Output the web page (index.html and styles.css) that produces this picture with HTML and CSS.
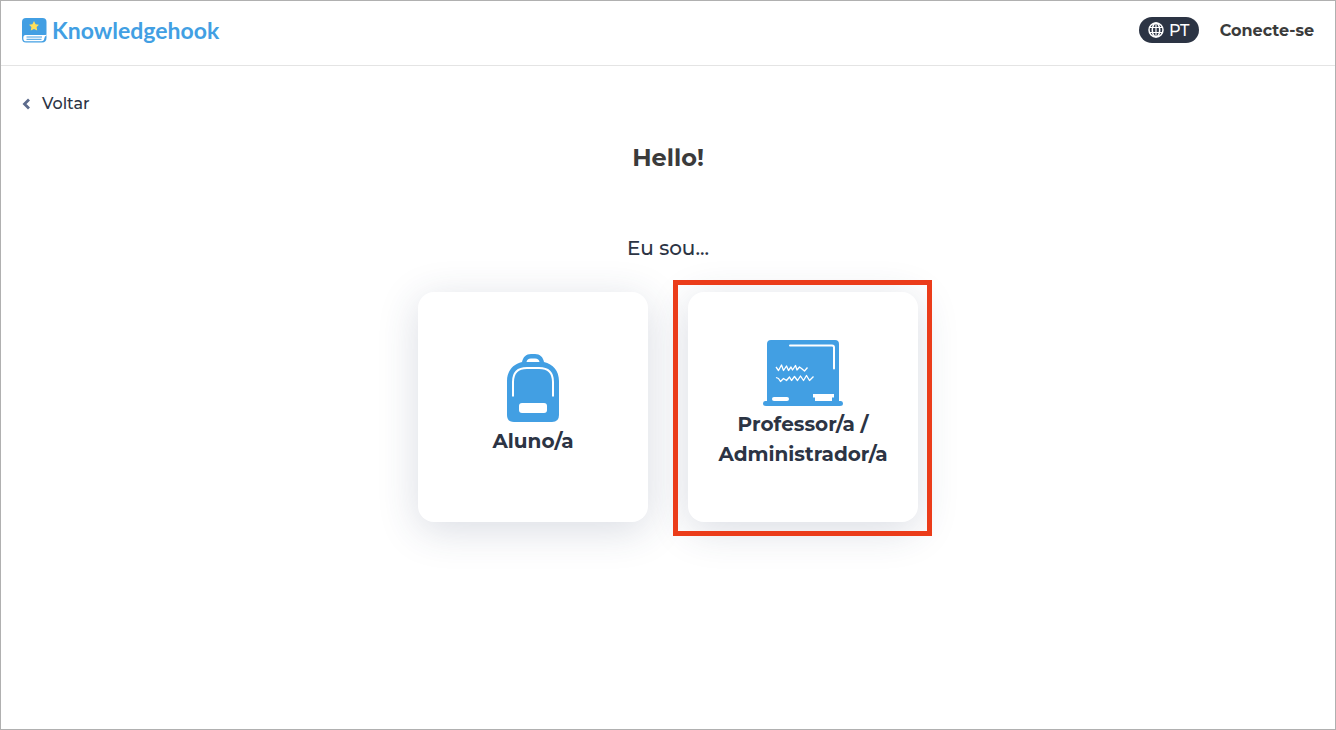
FILE: index.html
```html
<!DOCTYPE html>
<html lang="pt">
<head>
    <meta charset="UTF-8">
    <meta name="viewport" content="width=device-width, initial-scale=1">
    <title>Knowledgehook</title>
    <link rel="stylesheet" href="styles.css">
</head>
<body>
    <header class="header">
        <a class="logo" href="#">
            <svg class="logo-icon" width="26" height="26" viewBox="0 0 26 26" aria-hidden="true">
                <path fill="#429fe3" d="M5 1H21.500Q25.500 1 25.500 5V20.500Q25.500 25.500 21 25.500H5Q1 25.500 1 21V5Q1 1 5 1Z"/>
                <path fill="#fff" d="M4.500 18H24.500Q25.500 18 25.500 16.500V18.500Q23.500 19 23.300 21.500Q23 24.300 20.500 24.300H5Q2.300 24.300 2.300 21.200Q2.300 18 4.500 18Z"/>
                <path fill="none" stroke="#429fe3" d="M5.500 20H21M5.500 22.300H20.500"/>
                <path fill="#ffdf5a" d="M13 4L14.600 7.200L18 7.700L15.600 10L16.200 13.500L13 11.900L9.800 13.500L10.400 10L8 7.700L11.400 7.200Z"/>
            </svg>
            <span>Knowledgehook</span>
        </a>
        <nav class="header-nav">
            <button class="lang" type="button">
                <svg width="16" height="16" viewBox="0 0 16 16" fill="none" stroke="#fff" stroke-width="1.500" aria-hidden="true">
                    <circle cx="8" cy="8" r="7"/>
                    <ellipse cx="8" cy="8" rx="3.700" ry="7"/>
                    <path stroke-width="1.200" d="M8 1V15M1.500 5.500H14.500M1.500 10.500H14.500"/>
                </svg>
                PT
            </button>
            <a class="login" href="#">Conecte-se</a>
        </nav>
    </header>

    <main class="main">
        <a class="back" href="#">
            <svg width="10" height="12" viewBox="0 0 10 12" fill="none" stroke="#5c6b8c" stroke-width="2.800" aria-hidden="true">
                <path d="M8 1.500L3.500 6L8 10.500"/>
            </svg>
            Voltar
        </a>
        <h1 class="title">Hello!</h1>
        <p class="subtitle">Eu sou...</p>
        <div class="roles">
            <button class="role" type="button">
                <svg width="54" height="72" viewBox="0 0 54 72" aria-hidden="true">
                    <path fill="#429fe3" d="M1 27C1 17 7 10 16 8C17 3 20 0 25 0H29C34 0 37 3 38 8C47 10 53 17 53 27V61Q53 68 46 68H8Q1 68 1 61Z"/>
                    <path fill="#fff" d="M20.500 8Q21 4.500 25 4.500H29Q33 4.500 33.500 8Z"/>
                    <path fill="none" stroke="#fff" stroke-width="2" d="M7 42.500V28Q7 14 21 14H33Q47 14 47 28V42.500"/>
                    <rect x="13" y="49" width="28" height="10" rx="3" fill="#fff"/>
                </svg>
                <span>Aluno/a</span>
            </button>
            <button class="role role-selected" type="button">
                <svg width="80" height="69" viewBox="0 0 80 69" aria-hidden="true">
                    <path fill="#429fe3" d="M8 0H72Q76 0 76 4V61H78Q80 61 80 63.500Q80 66 77 66H3Q0 66 0 63.500Q0 61 2 61H4V4Q4 0 8 0Z"/>
                    <path fill="none" stroke="#fff" stroke-width="2" stroke-linecap="round" d="M27 5.500H69Q71 5.500 71 7.500V28.500"/>
                    <path fill="none" stroke="#fff" stroke-width="1.300" stroke-linejoin="round" d="M13 27L15.500 30.500L18.500 25L20.500 30.500L23.500 26L25.500 30.500L28 27L29.500 30L32.500 25.500L34 30L36.500 27L38.500 28.500L41.500 31L44.500 27.500"/>
                    <path fill="none" stroke="#fff" stroke-width="1.300" stroke-linejoin="round" d="M13 37.500L15.500 38.500L17.500 41.500L20.500 38.500L23.500 40.500L26.500 37L28.500 40.500L31.500 36.500L34.500 40.500L37.500 36L40.500 40.500L43.500 35.500L46.500 40.500L50.500 36.500"/>
                    <rect x="9" y="57" width="17" height="4" rx="2" fill="#fff"/>
                    <path fill="#fff" d="M50 54H71V57.500H69V61H52V57.500H50Z"/>
                </svg>
                <span>Professor/a / Administrador/a</span>
            </button>
        </div>
    </main>
</body>
</html>
```
FILE: styles.css
```css
:root {
    --blue: #429fe3;
    --dark: #2c3444;
    --text: #3b3b3b;
    --mark: #eb3c1a;
}

* {
    box-sizing: border-box;
}

body {
    margin: 0;
    min-height: 100vh;
    border: 1px solid #b0b0b0;
    background: #fff;
    color: var(--dark);
    font-family: Montserrat, Inter, sans-serif;
    font-size: 16px;
}

a {
    color: inherit;
    text-decoration: none;
}

button {
    border: 0;
    font-family: inherit;
    cursor: pointer;
}

.header {
    display: flex;
    align-items: center;
    justify-content: space-between;
    height: 65px;
    padding: 0 21px 6px 20px;
    border-bottom: 1px solid #e4e4e4;
}

.logo {
    display: flex;
    align-items: center;
    gap: 5px;
    color: var(--blue);
    font-family: Lato, sans-serif;
    font-size: 23px;
    font-weight: 700;
}

.header-nav {
    display: flex;
    align-items: center;
    gap: 21px;
}

.lang {
    display: flex;
    align-items: center;
    justify-content: center;
    gap: 5px;
    width: 60px;
    height: 26px;
    padding: 0;
    border-radius: 13px;
    background: var(--dark);
    color: #fff;
    font-size: 16px;
    font-weight: 500;
}

.login {
    color: var(--text);
    font-size: 16px;
    font-weight: 700;
}

.main {
    display: flex;
    flex-direction: column;
    align-items: center;
    padding: 26px 20px;
}

.back {
    display: flex;
    align-items: center;
    align-self: flex-start;
    gap: 11px;
    line-height: 24px;
    font-weight: 500;
}

.title {
    margin: 26px 0 0;
    color: var(--text);
    font-size: 24px;
    line-height: 32px;
    font-weight: 700;
}

.subtitle {
    margin: 60px 0 0;
    font-size: 20px;
    line-height: 28px;
    font-weight: 500;
}

.roles {
    display: flex;
    flex-wrap: wrap;
    justify-content: center;
    gap: 40px;
    margin-top: 30px;
}

.role {
    position: relative;
    display: flex;
    flex-direction: column;
    align-items: center;
    justify-content: center;
    width: 230px;
    height: 230px;
    padding: 0 20px 5px;
    border-radius: 16px;
    background: #fff;
    box-shadow: 0 8px 40px rgba(44, 60, 100, 0.18);
    color: var(--dark);
    font-size: 20px;
    line-height: 30px;
    font-weight: 700;
}

/* highlight frame around the chosen role */
.role-selected::after {
    content: "";
    position: absolute;
    inset: -12px -14px -14px -15px;
    border: 5px solid var(--mark);
}
```
